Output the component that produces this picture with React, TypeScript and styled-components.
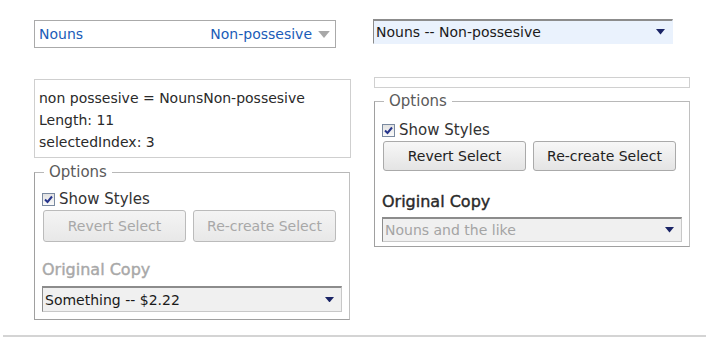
import * as React from 'react'
import styled, { createGlobalStyle } from 'styled-components'

const GlobalStyle = createGlobalStyle`
  html, body {
    margin: 0;
    padding: 0;
    background: #fff;
  }
  body {
    font-family: "DejaVu Sans", Verdana, sans-serif;
    font-size: 14px;
    color: #2a2a2a;
  }
`

const Page = styled.div`
  width: 706px;
  height: 339px;
  box-sizing: border-box;
  display: flex;
  flex-flow: column;
`

const Columns = styled.div`
  display: flex;
  align-items: flex-start;
  padding: 19px 0 0 34px;
  gap: 22px;
  flex: 1;
`

const Column = styled.div`
  width: 317px;
  display: flex;
  flex-flow: column;
`

const CustomSelect = styled.div`
  box-sizing: border-box;
  width: 302px;
  height: 28px;
  margin-top: 1px;
  border: 1px solid #aaa;
  display: flex;
  align-items: center;
  gap: 6px;
  padding: 0 5px 0 4px;
  color: #1a5cb8;
  font-size: 14px;
`

const Grow = styled.span`
  flex: 1;
`

const NativeSelect = styled.div<{ $bg: string; $framed?: boolean; $muted?: boolean }>`
  box-sizing: border-box;
  width: 300px;
  height: 25px;
  background: ${p => p.$bg};
  border-top: 2px solid #8c8c8c;
  border-left: 1px solid #8c8c8c;
  border-right: 1px solid ${p => (p.$framed ? '#c8c8c8' : 'transparent')};
  border-bottom: 1px solid ${p => (p.$framed ? '#c8c8c8' : 'transparent')};
  display: flex;
  align-items: center;
  padding: 0 7px 0 2px;
  color: ${p => (p.$muted ? '#a4a4a4' : '#1a1a1a')};
  font-size: 14px;
`

const InfoBox = styled.div`
  box-sizing: border-box;
  margin-top: 31px;
  width: 317px;
  height: 79px;
  border: 1px solid #cfcfcf;
  padding: 7px 4px 0;
  line-height: 22px;
  font-size: 14px;
`

const EmptyBox = styled.div`
  box-sizing: border-box;
  margin: 33px 0 0 1px;
  width: 316px;
  height: 11px;
  border: 1px solid #d0d0d0;
`

const Fieldset = styled.fieldset<{ $top: number; $height: number }>`
  box-sizing: border-box;
  margin: ${p => p.$top}px 0 0 0;
  width: 315px;
  height: ${p => p.$height}px;
  padding: 0 7px;
  border: 1px solid #a0a0a0;
  border-top-color: #b8b8b8;
  border-right-color: #c0c0c0;
  display: flex;
  flex-flow: column;
`

const Legend = styled.legend`
  padding: 0 5px;
  margin-left: 2px;
  line-height: 20px;
  font-size: 15px;
  color: #5a5a5a;
`

const CheckRow = styled.label`
  display: flex;
  align-items: center;
  gap: 4px;
  height: 20px;
  font-size: 15px;
  color: #333;
`

const CheckBox = styled.span`
  box-sizing: border-box;
  width: 13px;
  height: 13px;
  border: 1px solid #7a8aa0;
  background: linear-gradient(#e2e2e2, #fafafa);
  display: flex;
  align-items: center;
  justify-content: center;
`

const ButtonRow = styled.div`
  display: flex;
  gap: 7px;
  margin: 1px 0 0 1px;
`

const Button = styled.button<{ $height: number }>`
  box-sizing: border-box;
  width: 143px;
  height: ${p => p.$height}px;
  border: 1px solid #aaa;
  border-radius: 3px;
  background: linear-gradient(#f7f7f7, #e4e4e4);
  font-family: inherit;
  font-size: 14px;
  color: #222;
  padding: 0;
  &:disabled {
    color: #a8a8a8;
    background: linear-gradient(#f4f4f4, #e8e8e8);
    border-color: #bbb;
  }
`

const CopyLabel = styled.div<{ $muted?: boolean }>`
  font-size: 16px;
  line-height: 22px;
  -webkit-text-stroke: 0.4px currentColor;
  color: ${p => (p.$muted ? '#a8a8a8' : '#2a2a2a')};
`

const Rule = styled.hr`
  margin: 0 0 2px 3px;
  border: 0;
  border-top: 2px solid #d4d4d4;
`

function Arrow({ color, size }: { color: string; size: number }) {
  return (
    <svg width={size} height={size / 2 + 1} viewBox="0 0 10 6">
      <path d="M0 0 L10 0 L5 6 Z" fill={color} />
    </svg>
  )
}

function Check() {
  return (
    <svg width="9" height="9" viewBox="0 0 9 9">
      <path d="M1 4.5 L3.5 7 L8 1.5" stroke="#26358c" strokeWidth="2" fill="none" />
    </svg>
  )
}

export default function App() {
  return (
    <Page>
      <GlobalStyle />
      <Columns>
        <Column>
          <CustomSelect>
            <Grow>Nouns</Grow>
            <span>Non-possesive</span>
            <Arrow color="#a8a8a8" size={12} />
          </CustomSelect>
          <InfoBox>
            <div>non possesive = NounsNon-possesive</div>
            <div>Length: 11</div>
            <div>selectedIndex: 3</div>
          </InfoBox>
          <Fieldset $top={4} $height={158}>
            <Legend>Options</Legend>
            <CheckRow style={{ marginTop: 7 }}>
              <CheckBox><Check /></CheckBox>
              Show Styles
            </CheckRow>
            <ButtonRow>
              <Button $height={32} disabled>Revert Select</Button>
              <Button $height={32} disabled>Re-create Select</Button>
            </ButtonRow>
            <CopyLabel $muted style={{ marginTop: 17 }}>Original Copy</CopyLabel>
            <NativeSelect $bg="#f0f0f0" $framed style={{ marginTop: 5, height: 26 }}>
              <Grow>Something -- $2.22</Grow>
              <Arrow color="#1a2466" size={9} />
            </NativeSelect>
          </Fieldset>
        </Column>
        <Column>
          <NativeSelect $bg="#eaf2fd">
            <Grow>Nouns -- Non-possesive</Grow>
            <Arrow color="#1a2466" size={9} />
          </NativeSelect>
          <EmptyBox />
          <Fieldset $top={3} $height={156} style={{ marginLeft: 1 }}>
            <Legend>Options</Legend>
            <CheckRow style={{ marginTop: 9 }}>
              <CheckBox><Check /></CheckBox>
              Show Styles
            </CheckRow>
            <ButtonRow>
              <Button $height={30}>Revert Select</Button>
              <Button $height={30}>Re-create Select</Button>
            </ButtonRow>
            <CopyLabel style={{ marginTop: 20 }}>Original Copy</CopyLabel>
            <NativeSelect $bg="#f0f0f0" $framed $muted style={{ marginTop: 4 }}>
              <Grow>Nouns and the like</Grow>
              <Arrow color="#1a2466" size={9} />
            </NativeSelect>
          </Fieldset>
        </Column>
      </Columns>
      <Rule />
    </Page>
  )
}
